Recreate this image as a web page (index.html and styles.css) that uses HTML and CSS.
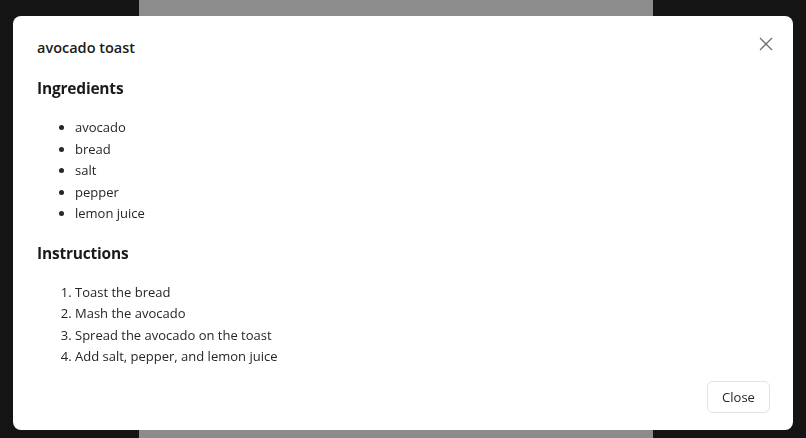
FILE: index.html
```html
<!DOCTYPE html>
<html>
<head>
<meta charset="utf-8">
<link rel="stylesheet" href="styles.css">
</head>
<body>
<div class="page">
  <div class="column"></div>
</div>
<div class="overlay">
  <div class="modal">
    <div class="modal-header">
      <h1 class="modal-title">avocado toast</h1>
      <button class="close-x" aria-label="Close">
        <svg width="14" height="14" viewBox="0 0 14 14"><path d="M1 1L13 13M13 1L1 13" stroke="#707070" stroke-width="1.3" fill="none"/></svg>
      </button>
    </div>
    <div class="modal-body">
      <h2 class="section">Ingredients</h2>
      <ul class="list">
        <li>avocado</li>
        <li>bread</li>
        <li>salt</li>
        <li>pepper</li>
        <li>lemon juice</li>
      </ul>
      <h2 class="section">Instructions</h2>
      <ol class="list">
        <li>Toast the bread</li>
        <li>Mash the avocado</li>
        <li>Spread the avocado on the toast</li>
        <li>Add salt, pepper, and lemon juice</li>
      </ol>
    </div>
    <div class="modal-footer">
      <button class="btn">Close</button>
    </div>
  </div>
</div>
</body>
</html>
```
FILE: styles.css
```css
html, body {
  margin: 0;
  height: 100%;
}
body {
  background: #141414;
  font-family: "Open Sans", "Noto Sans", sans-serif;
  color: #1f1f1f;
}
.page {
  display: flex;
  justify-content: center;
  height: 100%;
}
.column {
  width: 514px;
  margin-left: -14px;
  background: #8c8c8c;
  height: 100%;
}
.overlay {
  position: fixed;
  inset: 0;
  display: flex;
  align-items: flex-start;
  justify-content: center;
  padding-top: 16px;
}
.modal {
  width: 780px;
  height: 414px;
  background: #fff;
  border-radius: 8px;
  display: flex;
  flex-direction: column;
  box-sizing: border-box;
}
.modal-header {
  display: flex;
  align-items: center;
  justify-content: space-between;
  padding: 20px 16px 0 24px;
}
.modal-title {
  margin: 0;
  font-size: 14.5px;
  font-weight: 600;
  line-height: 24px;
  color: #1b1b1b;
}
.close-x {
  border: 0;
  background: none;
  padding: 0;
  width: 22px;
  height: 22px;
  display: flex;
  align-items: center;
  justify-content: center;
  margin-top: -9px;
}
.modal-body {
  padding: 0 24px;
  flex: 1;
}
.section {
  margin: 16px 0 0;
  font-size: 15.5px;
  letter-spacing: -0.2px;
  font-weight: 700;
  line-height: 24px;
  color: #1b1b1b;
}
.list {
  margin: 17px 0 13px;
  padding-left: 38px;
  font-size: 13px;
  line-height: 21.5px;
  color: #262626;
}
.modal-footer {
  display: flex;
  justify-content: flex-end;
  padding: 0 23px 24px;
}
.btn {
  font-family: inherit;
  font-size: 13px;
  color: #262626;
  background: #fff;
  border: 1px solid #e2e2e2;
  border-radius: 6px;
  width: 63px;
  height: 32px;
  padding: 0;
}
```
